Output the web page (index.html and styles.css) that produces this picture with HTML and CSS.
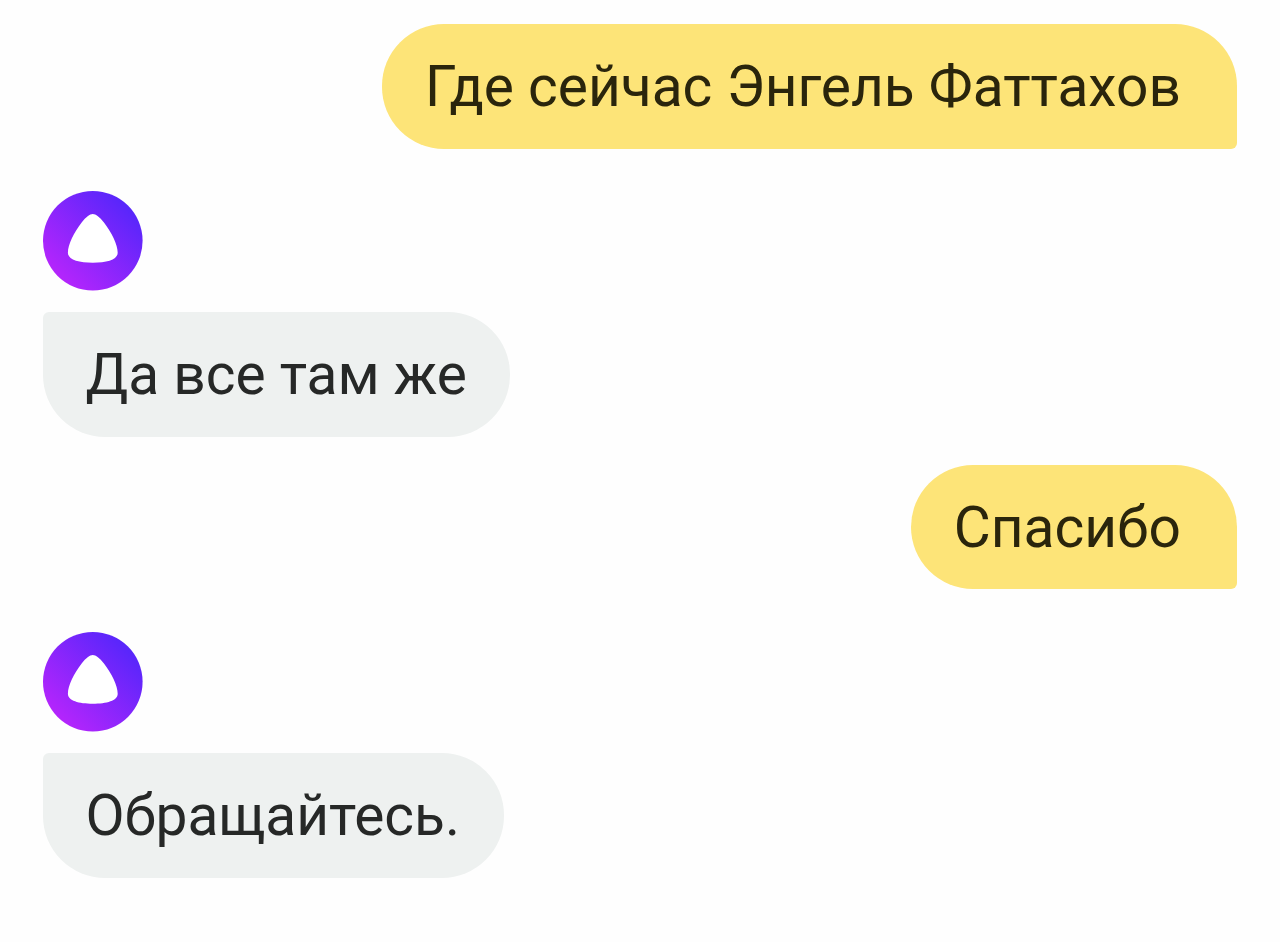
FILE: index.html
```
<!DOCTYPE html>
<html lang="ru">

<head>
    <meta charset="UTF-8">
    <meta name="viewport" content="width=device-width, initial-scale=1.0">
    <title>Алиса</title>
    <link rel="stylesheet" href="styles.css">
</head>

<body>
    <main class="chat">
        <div class="message user">Где сейчас Энгель Фаттахов</div>
        <div class="reply">
            <svg class="avatar" viewBox="0 0 100 100" aria-hidden="true">
                <defs>
                    <linearGradient id="alice" x1="0.15" y1="0.85" x2="0.85" y2="0.15">
                        <stop offset="0" stop-color="#b425fc" />
                        <stop offset="1" stop-color="#5826fb" />
                    </linearGradient>
                </defs>
                <circle cx="50" cy="50" r="50" fill="url(#alice)" />
                <path d="M50 23C53 23 57 26 61 31.5C69 42 75 54 75 62C75 69 64 72 50 72C36 72 25 69 25 62C25 54 31 42 39 31.5C43 26 47 23 50 23Z" fill="#fff" />
            </svg>
            <div class="message alice">Да все там же</div>
        </div>
        <div class="message user">Спасибо</div>
        <div class="reply">
            <svg class="avatar" viewBox="0 0 100 100" aria-hidden="true">
                <circle cx="50" cy="50" r="50" fill="url(#alice)" />
                <path d="M50 23C53 23 57 26 61 31.5C69 42 75 54 75 62C75 69 64 72 50 72C36 72 25 69 25 62C25 54 31 42 39 31.5C43 26 47 23 50 23Z" fill="#fff" />
            </svg>
            <div class="message alice">Обращайтесь.</div>
        </div>
    </main>
</body>

</html>
```
FILE: styles.css
```
* {
    box-sizing: border-box;
}

body {
    margin: 0;
    background: #fefefe;
    font-family: Roboto, sans-serif;
}

.chat {
    display: flex;
    flex-direction: column;
    height: 942px;
    padding: 24.3px 42.6px 0;
    overflow: hidden;
}

.message {
    flex-shrink: 0;
    height: 124.4px;
    font-size: 56.85px;
    line-height: 125.4px;
    white-space: nowrap;
}

.user {
    align-self: flex-end;
    padding: 0 56.5px 0 43px;
    border-radius: 62px 62px 6px 62px;
    background: #fde478;
    color: #2a250c;
}

.reply {
    display: flex;
    flex-direction: column;
    flex-shrink: 0;
    align-items: flex-start;
    gap: 21.4px;
    margin: 42.7px 0 28.3px;
}

.avatar {
    width: 99.6px;
    height: 99.6px;
    overflow: visible;
}

.alice {
    padding: 0 43.6px 0 42.8px;
    border-radius: 6px 62px 62px 62px;
    background: #eef1f0;
    color: #262827;
}
```
